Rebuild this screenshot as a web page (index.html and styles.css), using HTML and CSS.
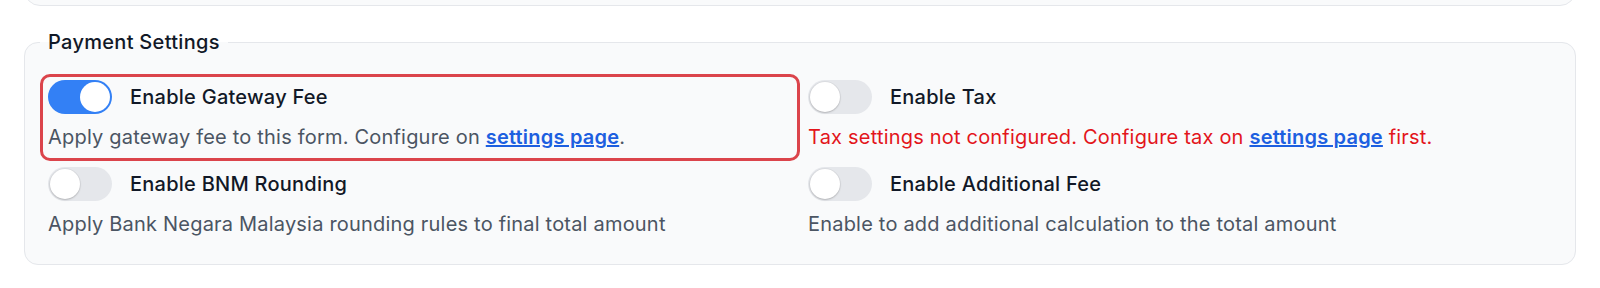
FILE: index.html
```html
<!DOCTYPE html>
<html>
<head>
    <title>Payment Settings</title>
    <link rel="stylesheet" href="styles.css">
</head>
<body>
    <div class="page">
        <div class="top-card"></div>

        <fieldset class="settings-group">
            <legend>Payment Settings</legend>

            <div class="settings-grid">
                <div class="setting highlighted">
                    <div class="setting-head">
                        <span class="switch on"><span class="knob"></span></span>
                        <span class="setting-label">Enable Gateway Fee</span>
                    </div>
                    <p class="setting-desc">Apply gateway fee to this form. Configure on <a href="#">settings page</a>.</p>
                </div>

                <div class="setting">
                    <div class="setting-head">
                        <span class="switch"><span class="knob"></span></span>
                        <span class="setting-label">Enable Tax</span>
                    </div>
                    <p class="setting-desc error">Tax settings not configured. Configure tax on <a href="#">settings page</a> first.</p>
                </div>

                <div class="setting">
                    <div class="setting-head">
                        <span class="switch"><span class="knob"></span></span>
                        <span class="setting-label">Enable BNM Rounding</span>
                    </div>
                    <p class="setting-desc">Apply Bank Negara Malaysia rounding rules to final total amount</p>
                </div>

                <div class="setting">
                    <div class="setting-head">
                        <span class="switch"><span class="knob"></span></span>
                        <span class="setting-label">Enable Additional Fee</span>
                    </div>
                    <p class="setting-desc">Enable to add additional calculation to the total amount</p>
                </div>
            </div>
        </fieldset>
    </div>
</body>
</html>
```

FILE: styles.css
```css
body {
    font-family: Inter, "Noto Sans", sans-serif;
    margin: 0;
    padding: 0;
    background-color: #fff;
    color: #111827;
}

.page {
    padding: 0 24px;
}

/* card cut off at the top of the view */
.top-card {
    height: 36px;
    margin-top: -32px;
    background-color: #f9fafb;
    border: 1px solid #e5e7eb;
    border-radius: 16px;
}

.settings-group {
    margin: 23px 0 0 0;
    padding: 18px 15px 16px 15px;
    background-color: #f9fafb;
    border: 1px solid #e5e7eb;
    border-radius: 14px;
}

.settings-group legend {
    padding: 0 8px;
    font-size: 20px;
    font-weight: 500;
    line-height: 27px;
    letter-spacing: 0.3px;
    color: #111827;
}

.settings-grid {
    display: grid;
    grid-template-columns: 1fr 1fr;
}

.setting {
    padding: 3px 5px 7px 5px;
    border: 3px solid transparent;
    border-radius: 10px;
}

.setting.highlighted {
    border-color: #db444b;
}

.setting-head {
    display: flex;
    align-items: center;
    gap: 18px;
}

.setting-label {
    font-size: 20px;
    font-weight: 500;
    letter-spacing: 0.25px;
    color: #111827;
}

.setting-desc {
    margin: 9px 0 0 0;
    font-size: 20px;
    line-height: 28px;
    letter-spacing: 0.2px;
    color: #4b5563;
}

.setting-desc a {
    color: #1d5fe0;
    font-weight: 600;
    text-decoration: underline;
}

.setting-desc.error {
    color: #e3151b;
}

/* toggle switches */
.switch {
    display: flex;
    align-items: center;
    flex-shrink: 0;
    width: 64px;
    height: 34px;
    padding: 2px;
    box-sizing: border-box;
    border-radius: 17px;
    background-color: #e5e7eb;
}

.switch .knob {
    width: 30px;
    height: 30px;
    border-radius: 50%;
    background-color: #fff;
    box-shadow: 0 1px 2px rgba(0, 0, 0, 0.18), 0 0 0 1px rgba(0, 0, 0, 0.04);
}

.switch.on {
    background-color: #3380f5;
    justify-content: flex-end;
}

.switch.on .knob {
    box-shadow: none;
}
```
